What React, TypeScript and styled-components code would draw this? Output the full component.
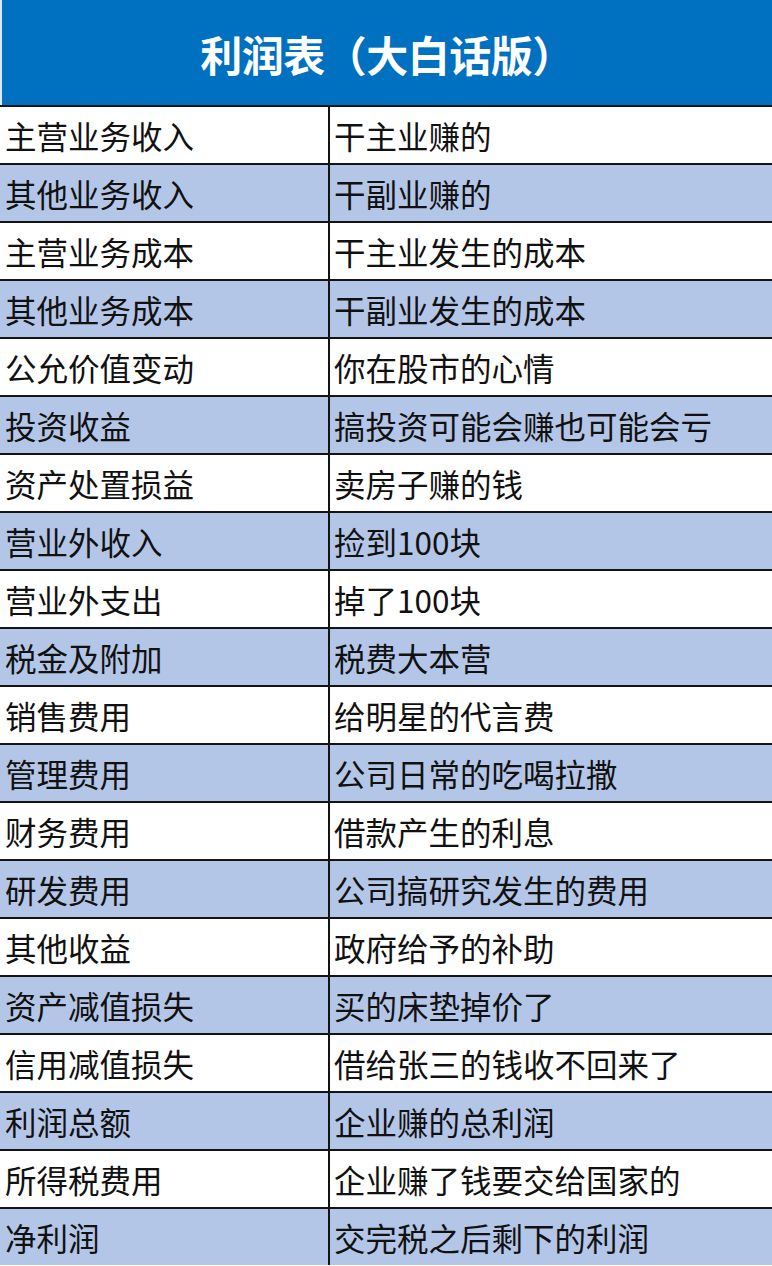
import styled, { createGlobalStyle } from 'styled-components';

const GlobalStyle = createGlobalStyle`
  html, body {
    margin: 0;
    padding: 0;
    background: #ffffff;
  }
  body {
    font-family: "Noto Sans CJK SC", "Noto Sans", sans-serif;
  }
`;

const Sheet = styled.div`
  width: 772px;
  display: flex;
  flex-direction: column;
  background: #ffffff;
`;

const Header = styled.div`
  height: 105px;
  background: #0070c0;
  display: flex;
  align-items: center;
  justify-content: center;
  border-left: 2px solid #dfe9f3;
  box-sizing: border-box;
`;

const Title = styled.h1`
  margin: 0;
  padding-top: 2px;
  color: #ffffff;
  font-size: 42px;
  font-weight: 700;
  letter-spacing: -0.5px;
  line-height: 1;
`;

const Row = styled.div<{ $shaded: boolean }>`
  display: grid;
  grid-template-columns: 330px 1fr;
  height: 58px;
  box-sizing: border-box;
  border-top: 2px solid #141414;
  background: ${({ $shaded }) => ($shaded ? '#b4c6e7' : '#ffffff')};
`;

const Cell = styled.div<{ $first?: boolean }>`
  display: flex;
  align-items: center;
  padding: 1px 0 0 ${({ $first }) => ($first ? '5px' : '4px')};
  box-sizing: border-box;
  border-right: ${({ $first }) => ($first ? '2px solid #141414' : 'none')};
  color: #111111;
  font-size: 31.5px;
  line-height: 1;
  white-space: nowrap;
`;

// 科目 / 大白话解释
const rows: [string, string][] = [
  ['主营业务收入', '干主业赚的'],
  ['其他业务收入', '干副业赚的'],
  ['主营业务成本', '干主业发生的成本'],
  ['其他业务成本', '干副业发生的成本'],
  ['公允价值变动', '你在股市的心情'],
  ['投资收益', '搞投资可能会赚也可能会亏'],
  ['资产处置损益', '卖房子赚的钱'],
  ['营业外收入', '捡到100块'],
  ['营业外支出', '掉了100块'],
  ['税金及附加', '税费大本营'],
  ['销售费用', '给明星的代言费'],
  ['管理费用', '公司日常的吃喝拉撒'],
  ['财务费用', '借款产生的利息'],
  ['研发费用', '公司搞研究发生的费用'],
  ['其他收益', '政府给予的补助'],
  ['资产减值损失', '买的床垫掉价了'],
  ['信用减值损失', '借给张三的钱收不回来了'],
  ['利润总额', '企业赚的总利润'],
  ['所得税费用', '企业赚了钱要交给国家的'],
  ['净利润', '交完税之后剩下的利润'],
];

export default function App() {
  return (
    <>
      <GlobalStyle />
      <Sheet>
        <Header>
          <Title>利润表（大白话版）</Title>
        </Header>
        {rows.map(([item, plain], i) => (
          <Row key={item} $shaded={i % 2 === 1}>
            <Cell $first>{item}</Cell>
            <Cell>{plain}</Cell>
          </Row>
        ))}
      </Sheet>
    </>
  );
}
